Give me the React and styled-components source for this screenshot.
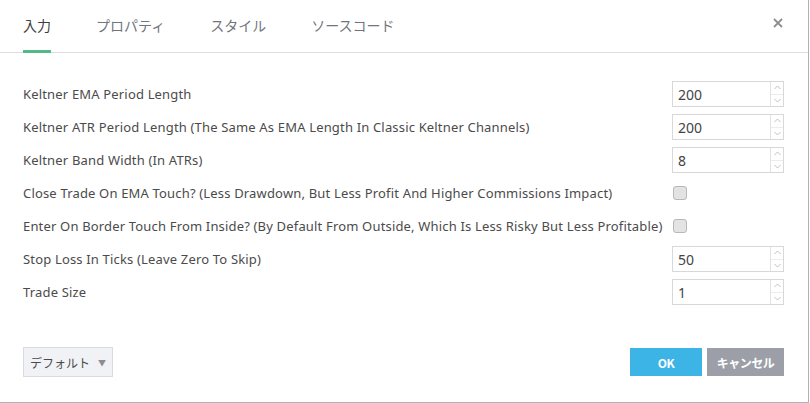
import React from "react";
import styled, { createGlobalStyle } from "styled-components";

const Global = createGlobalStyle`
  html, body { margin: 0; padding: 0; background: #ffffff; }
  body { font-family: "Noto Sans", "Noto Sans CJK JP", sans-serif; }
  * { box-sizing: border-box; }
`;

const Dialog = styled.div`
  width: 809px;
  height: 403px;
  background: #fff;
  border-right: 1px solid #b2b2b2;
  border-bottom: 1px solid #b2b2b2;
  display: flex;
  flex-direction: column;
`;

const Header = styled.div`
  height: 53px;
  border-bottom: 1px solid #dcdee2;
  display: flex;
  align-items: stretch;
  padding-left: 23px;
  padding-right: 20px;
`;

const Tabs = styled.div`
  display: flex;
  gap: 45px;
  flex: 1;
`;

const Tab = styled.div`
  font-family: "Noto Sans CJK JP", sans-serif;
  font-size: 14px;
  color: ${(p) => (p.$active ? "#3e3e3e" : "#72757b")};
  display: flex;
  align-items: center;
  padding-bottom: 1px;
  margin-bottom: -1px;
  border-bottom: 3px solid ${(p) => (p.$active ? "#53b987" : "transparent")};
`;

const Close = styled.div`
  width: 20px;
  display: flex;
  align-items: center;
  justify-content: center;
  padding-bottom: 6px;
`;

const Body = styled.div`
  flex: 1;
  padding: 28px 24px 0 23px;
  display: grid;
  grid-template-columns: 1fr 112px;
  grid-auto-rows: 26px;
  row-gap: 7px;
  align-content: start;
`;

const Label = styled.div`
  font-size: 13px;
  letter-spacing: 0.17px;
  color: #4b4b4b;
  display: flex;
  align-items: center;
  white-space: nowrap;
`;

const Control = styled.div`
  display: flex;
  align-items: center;
`;

const NumberBox = styled.div`
  width: 112px;
  height: 26px;
  border: 1px solid #d8d8d8;
  display: flex;
  background: #fff;
`;

const NumberValue = styled.div`
  flex: 1;
  font-size: 14px;
  color: #444;
  padding-left: 5px;
  display: flex;
  align-items: center;
`;

const Spinner = styled.div`
  width: 13px;
  border-left: 1px solid #e2e2e2;
  display: flex;
  flex-direction: column;
`;

const SpinHalf = styled.div`
  flex: 1;
  display: flex;
  align-items: center;
  justify-content: center;
  & + & { border-top: 1px solid #ececec; }
`;

const Check = styled.div`
  width: 14px;
  height: 14px;
  margin-left: 1px;
  border: 1px solid #b9b9b9;
  border-radius: 3px;
  background: #e3e3e3;
`;

const Footer = styled.div`
  display: flex;
  align-items: center;
  padding: 0 24px 25px 23px;
  gap: 5px;
`;

const DefaultsButton = styled.div`
  width: 90px;
  height: 30px;
  background: #f1f2f5;
  border: 1px solid #d9dbe0;
  display: flex;
  align-items: center;
  justify-content: center;
  gap: 8px;
  font-family: "Noto Sans CJK JP", sans-serif;
  font-size: 12px;
  color: #4a4a4a;
  margin-right: auto;
`;

const Caret = styled.span`
  font-size: 8px;
  color: #8d8d8d;
`;

const ActionButton = styled.div`
  height: 28px;
  width: ${(p) => p.$w}px;
  background: ${(p) => p.$bg};
  color: #fff;
  font-family: "Noto Sans CJK JP", sans-serif;
  font-weight: 700;
  font-size: 12px;
  display: flex;
  align-items: center;
  justify-content: center;
  letter-spacing: -0.5px;
`;

const Chevron = ({ up }) => (
  <svg width="7" height="5" viewBox="0 0 7 5">
    <path
      d={up ? "M0.5 4L3.5 1L6.5 4" : "M0.5 1L3.5 4L6.5 1"}
      fill="none"
      stroke="#b8c2cc"
      strokeWidth="1"
    />
  </svg>
);

const rows = [
  { label: "Keltner EMA Period Length", value: "200" },
  { label: "Keltner ATR Period Length (The Same As EMA Length In Classic Keltner Channels)", value: "200" },
  { label: "Keltner Band Width (In ATRs)", value: "8" },
  { label: "Close Trade On EMA Touch? (Less Drawdown, But Less Profit And Higher Commissions Impact)", check: true },
  { label: "Enter On Border Touch From Inside? (By Default From Outside, Which Is Less Risky But Less Profitable)", check: true },
  { label: "Stop Loss In Ticks (Leave Zero To Skip)", value: "50" },
  { label: "Trade Size", value: "1" },
];

export default function App() {
  return (
    <>
      <Global />
      <Dialog>
        <Header>
          <Tabs>
            <Tab $active>入力</Tab>
            <Tab>プロパティ</Tab>
            <Tab>スタイル</Tab>
            <Tab>ソースコード</Tab>
          </Tabs>
          <Close>
            <svg width="10" height="10" viewBox="0 0 10 10">
              <path d="M1 1L9 9M9 1L1 9" stroke="#8e8e8e" strokeWidth="1.8" />
            </svg>
          </Close>
        </Header>
        <Body>
          {rows.map((r) => (
            <React.Fragment key={r.label}>
              <Label>{r.label}</Label>
              <Control>
                {r.check ? (
                  <Check />
                ) : (
                  <NumberBox>
                    <NumberValue>{r.value}</NumberValue>
                    <Spinner>
                      <SpinHalf><Chevron up /></SpinHalf>
                      <SpinHalf><Chevron /></SpinHalf>
                    </Spinner>
                  </NumberBox>
                )}
              </Control>
            </React.Fragment>
          ))}
        </Body>
        <Footer>
          <DefaultsButton>
            デフォルト <Caret>▼</Caret>
          </DefaultsButton>
          <ActionButton $w={72} $bg="#3cb4e5">OK</ActionButton>
          <ActionButton $w={77} $bg="#9c9fa7">キャンセル</ActionButton>
        </Footer>
      </Dialog>
    </>
  );
}
